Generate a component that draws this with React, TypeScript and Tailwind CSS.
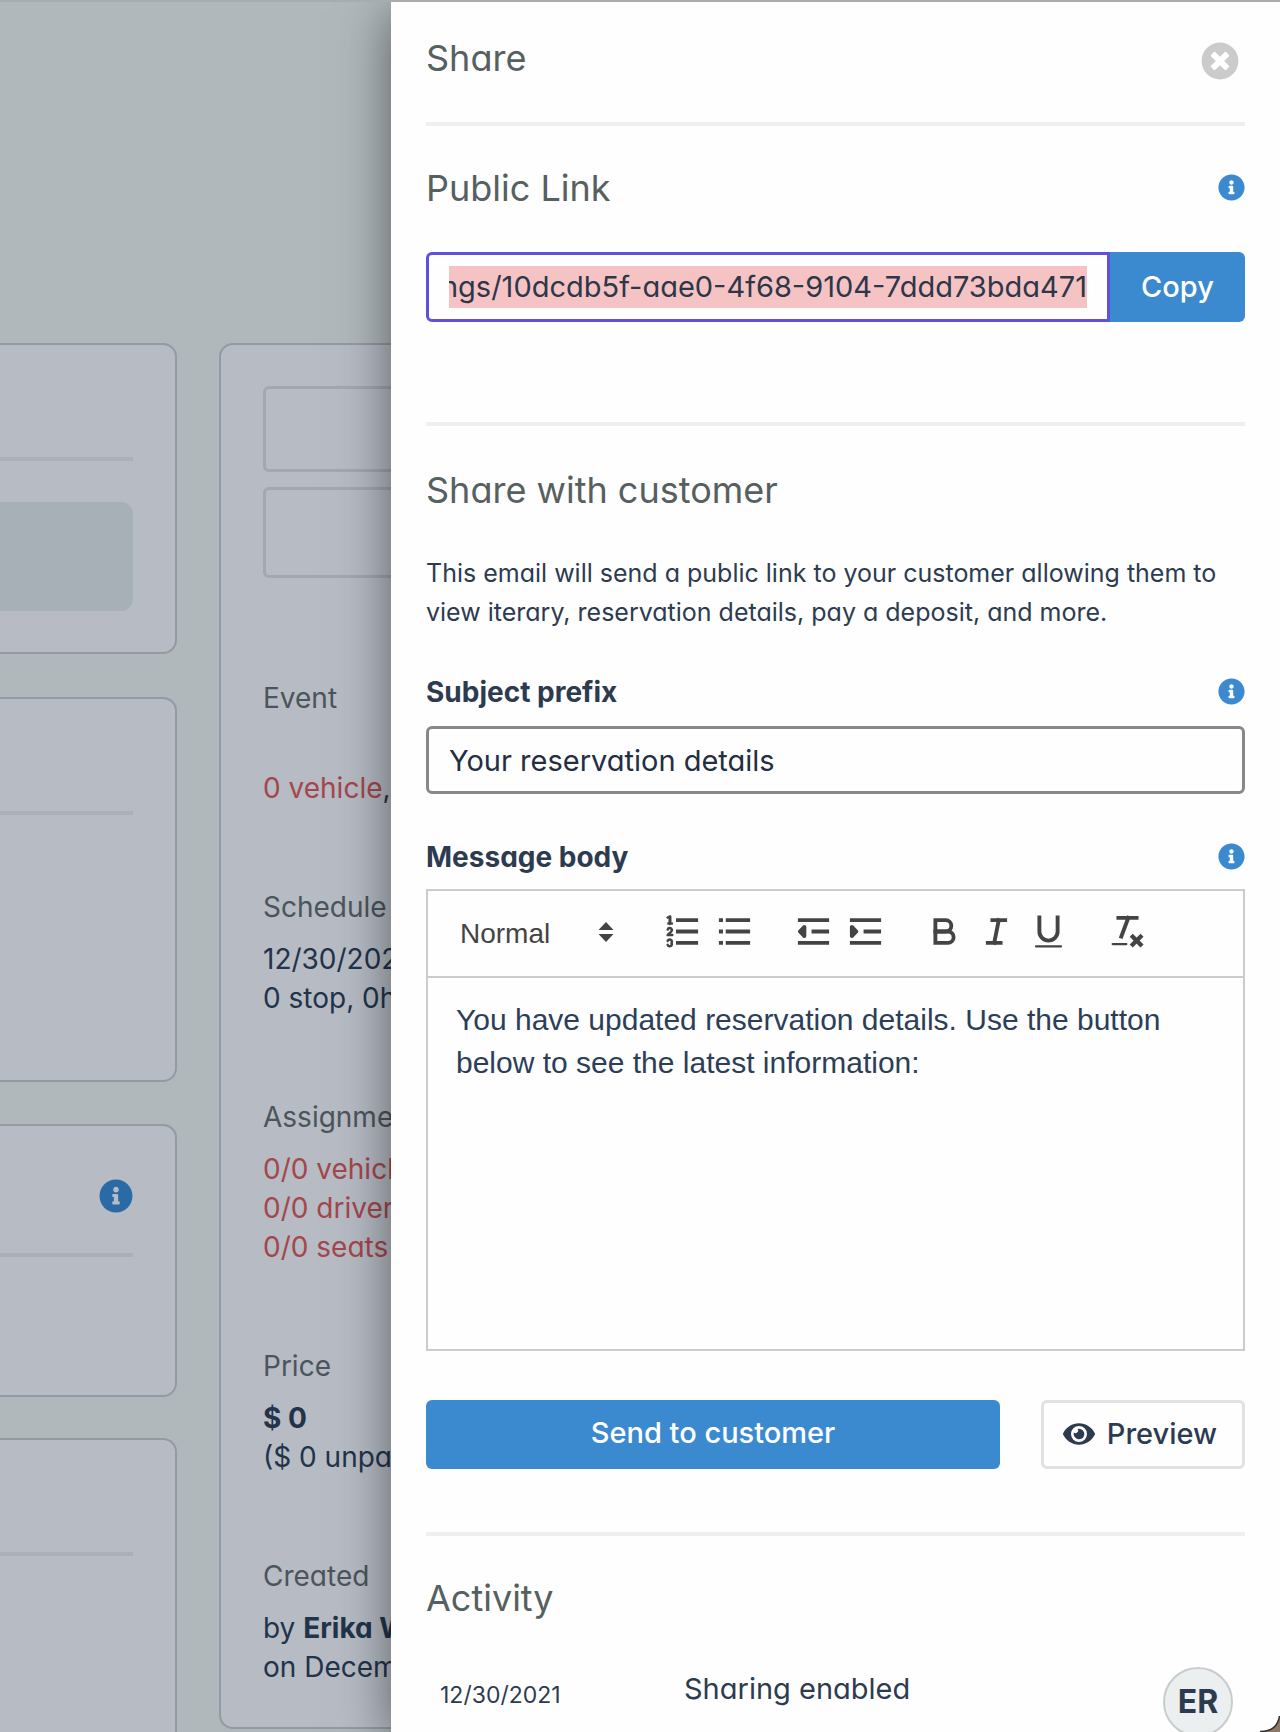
import { useEffect, useRef } from "react";
import type { ReactNode } from "react";
import { FaEye, FaInfoCircle, FaTimesCircle } from "react-icons/fa";

function Divider() {
  return <hr className="h-1 border-0 bg-[#eeefef]" />;
}

function InfoButton({ label }: { label: string }) {
  return (
    <button type="button" aria-label={label} className="shrink-0 pb-0.5 text-[#3b8ad0]">
      <FaInfoCircle className="size-[27px]" />
    </button>
  );
}

function Heading({ children }: { children: ReactNode }) {
  return <h2 className="text-[36px] leading-[48px] text-[#566060]">{children}</h2>;
}

function ToolButton({ label, children }: { label: string; children: ReactNode }) {
  return (
    <button type="button" aria-label={label} className="flex h-11 w-[52px] items-center justify-center">
      <svg
        viewBox="0 0 18 18"
        className="size-[41px] shrink-0 fill-none stroke-[#444] stroke-[1.7]"
        strokeLinecap="square"
      >
        {children}
      </svg>
    </button>
  );
}

function Toolbar() {
  return (
    <div className="flex h-[87px] items-center gap-[27px] border-b-2 border-[#ccc] pb-1 pl-8">
      <div className="relative">
        <select
          aria-label="Text style"
          defaultValue="Normal"
          className="w-[169px] appearance-none bg-transparent pt-1 font-['Liberation_Sans',sans-serif] text-[28px] leading-[40px] font-medium text-[#444]"
        >
          <option>Normal</option>
          <option>Heading</option>
        </select>
        <svg viewBox="0 0 16 20" className="pointer-events-none absolute top-3 left-[138px] h-5 w-4 fill-[#444]">
          <path d="M8 0 15.5 8H.5ZM8 20 .5 12h15Z" />
        </svg>
      </div>
      <div className="flex">
        <ToolButton label="Numbered list">
          <path d="M7 4h8M7 9h8M7 14h8" />
          <path className="stroke-1" d="M2.8 5.5h1.5" />
          <path
            className="fill-[#444] stroke-[0.3]"
            d="M3.5,6A0.5,0.5,0,0,1,3,5.5V3.085l-0.276.138A0.5,0.5,0,0,1,2.053,3c-0.124-.247-0.023-0.324.224-0.447l1-.5A0.5,0.5,0,0,1,4,2.5v3A0.5,0.5,0,0,1,3.5,6Z"
          />
          <g className="stroke-[1.1]" strokeLinecap="round">
            <path d="M4.5,10.5h-2c0-.234,1.85-1.076,1.85-2.234A0.959,0.959,0,0,0,2.5,8.156" />
            <path d="M2.5,14.846a0.959,0.959,0,0,0,1.85-.109A0.7,0.7,0,0,0,3.75,14a0.688,0.688,0,0,0,.6-0.736,0.959,0.959,0,0,0-1.85-.109" />
          </g>
        </ToolButton>
        <ToolButton label="Bulleted list">
          <path d="M6 4h9M6 9h9M6 14h9M3 4h.1M3 9h.1M3 14h.1" />
        </ToolButton>
      </div>
      <div className="flex">
        <ToolButton label="Decrease indent">
          <path d="M3 14h12M3 4h12M9 9h6" />
          <path className="fill-[#444]" strokeLinejoin="round" d="M5 7v4L3 9Z" />
        </ToolButton>
        <ToolButton label="Increase indent">
          <path d="M3 14h12M3 4h12M9 9h6" />
          <path className="fill-[#444]" strokeLinejoin="round" d="M3 7v4l2-2Z" />
        </ToolButton>
      </div>
      <div className="flex">
        <ToolButton label="Bold">
          <path d="M5 4h4.5a2.5 2.5 0 0 1 0 5H5Z" />
          <path d="M5 9h5.5a2.5 2.5 0 0 1 0 5H5Z" />
        </ToolButton>
        <ToolButton label="Italic">
          <path d="M7.2 4h5.6M5.2 14h5.6M8 14 10 4" />
        </ToolButton>
        <ToolButton label="Underline">
          <path d="M5 2.8V9a4 4 0 0 0 8 0V2.8" />
          <rect className="fill-[#444] stroke-none" x="3" y="15" width="12" height="1" rx=".5" />
        </ToolButton>
      </div>
      <ToolButton label="Clear formatting">
        <path d="M5 3h8M6.3 11.2 9.35 3" />
        <path className="stroke-[1.9]" d="M11.3 11.3l3.4 3.4M14.7 11.3l-3.4 3.4" />
        <rect className="fill-[#444] stroke-none" x="2" y="14" width="7" height="1" rx=".5" />
      </ToolButton>
    </div>
  );
}

function SideCard({ className, children }: { className: string; children?: ReactNode }) {
  return (
    <section
      className={`shrink-0 rounded-r-[14px] border-2 border-l-0 border-[#949aa1] bg-[#b6bbc4] pr-[42px] ${className}`}
    >
      {children}
    </section>
  );
}

function SideRule() {
  return <hr className="h-1 border-0 bg-[#a9b0b8]" />;
}

function Detail({ label, children }: { label: string; children: ReactNode }) {
  return (
    <div className="mb-20">
      <dt className="mb-[13px] text-[#4b555a]">{label}</dt>
      <dd>{children}</dd>
    </div>
  );
}

function Backdrop() {
  return (
    <div className="flex w-[391px] shrink-0 gap-[42px] overflow-hidden pt-[341px] text-[28px] leading-[39px] whitespace-nowrap text-[#22334a]">
      <div className="flex w-[177px] shrink-0 flex-col">
        <SideCard className="mb-[43px] h-[311px] pt-[112px]">
          <SideRule />
          <div className="mt-[41px] h-[109px] rounded-r-xl bg-[#a8b0b7]" />
        </SideCard>
        <SideCard className="mb-[42px] h-[385px] pt-[112px]">
          <SideRule />
        </SideCard>
        <SideCard className="mb-[41px] h-[273px] pt-[53px]">
          <button type="button" aria-label="About this section" className="ml-auto block text-[#2b6ba5]">
            <FaInfoCircle className="size-[34px]" />
          </button>
          <div className="mt-10">
            <SideRule />
          </div>
        </SideCard>
        <SideCard className="h-[320px] pt-[112px]">
          <SideRule />
        </SideCard>
      </div>
      <section className="w-[420px] shrink-0 self-start rounded-[14px] border-2 border-[#949aa1] bg-[#b6bbc4] px-[42px] pt-[41px]">
        <div className="h-[86px] rounded-md border-[3px] border-[#a2a8b0]" />
        <div className="mt-[15px] h-[91px] rounded-md border-[3px] border-[#a2a8b0]" />
        <dl className="mt-[101px] -mb-10">
          <div className="mb-20">
            <dt className="mb-[51px] text-[#4b555a]">Event</dt>
            <dd>
              <span className="text-[#a3474d]">0 vehicle</span>,
            </dd>
          </div>
          <Detail label="Schedule">
            12/30/2021
            <br />0 stop, 0h
          </Detail>
          <Detail label="Assignments">
            <span className="text-[#a3474d]">
              0/0 vehicle
              <br />
              0/0 driver
              <br />
              0/0 seats
            </span>
          </Detail>
          <Detail label="Price">
            <strong>$ 0</strong>
            <br />
            ($ 0 unpaid)
          </Detail>
          <Detail label="Created">
            by <strong>Erika W</strong>
            <br />
            on December
          </Detail>
        </dl>
      </section>
    </div>
  );
}

function PublicLink() {
  const link = useRef<HTMLInputElement>(null);

  useEffect(() => {
    const input = link.current;
    if (!input) return;
    input.focus();
    input.select();
    input.scrollLeft = input.scrollWidth;
  }, []);

  return (
    <section className="pt-[38px] pb-[100px]">
      <div className="mb-10 flex items-center justify-between">
        <Heading>Public Link</Heading>
        <InfoButton label="About the public link" />
      </div>
      <div className="flex h-[70px]">
        <input
          ref={link}
          readOnly
          aria-label="Public link"
          defaultValue="/bookings/10dcdb5f-aae0-4f68-9104-7ddd73bda471"
          className="min-w-0 flex-1 rounded-l-md border-[3px] border-[#6150dc] px-5 text-[29px] leading-[42px] text-[#2d3748] outline-none selection:bg-[#f6c3c5] selection:text-[#2d3748]"
        />
        <button type="button" className="w-[135px] rounded-r-md bg-[#3b8ad0] text-[29px] font-medium text-white">
          Copy
        </button>
      </div>
    </section>
  );
}

function ShareWithCustomer() {
  return (
    <section className="pt-10 pb-[63px]">
      <Heading>Share with customer</Heading>
      <p className="my-10 text-[25px] leading-[39px]">
        This email will send a public link to your customer allowing them to view iterary, reservation details, pay a
        deposit, and more.
      </p>
      <div className="mb-3.5 flex items-center justify-between">
        <label htmlFor="subject" className="text-[28px] leading-[40px] font-bold">
          Subject prefix
        </label>
        <InfoButton label="About the subject prefix" />
      </div>
      <input
        id="subject"
        defaultValue="Your reservation details"
        className="h-[68px] w-full rounded-md border-[3px] border-[#888] px-5 text-[29px] text-[#232e42]"
      />
      <div className="mt-[43px] mb-3 flex items-center justify-between">
        <label htmlFor="message" className="text-[28px] leading-[40px] font-bold">
          Message body
        </label>
        <InfoButton label="About the message body" />
      </div>
      <div className="border-2 border-[#ccc]">
        <Toolbar />
        <textarea
          id="message"
          defaultValue="You have updated reservation details. Use the button below to see the latest information:"
          className="block h-[371px] w-full resize-none px-7 py-5 font-['Liberation_Sans',sans-serif] text-[30px] leading-[43px] text-[#2c3e58] outline-none"
        />
      </div>
      <div className="mt-[49px] flex h-[69px] gap-[41px] text-[29px] font-medium">
        <button type="button" className="flex-1 rounded-md bg-[#3b8ad0] pb-1 text-white">
          Send to customer
        </button>
        <button
          type="button"
          className="flex w-[204px] items-center justify-center gap-3 rounded-md border-[3px] border-[#dfe1e2] pr-1.5 pb-0.5"
        >
          <FaEye className="size-8" />
          Preview
        </button>
      </div>
    </section>
  );
}

function Activity() {
  return (
    <section className="pt-[38px]">
      <Heading>Activity</Heading>
      <div className="mt-[45px] flex pr-3 pl-3.5">
        <time className="w-[244px] pt-2 text-[23px] leading-[40px]">12/30/2021</time>
        <p className="flex-1 pt-0.5 text-[29px] leading-[40px]">Sharing enabled</p>
        <div className="flex size-[70px] items-center justify-center rounded-full border-2 border-[#c9cccd] bg-[#eceff0] text-[32px] font-bold">
          ER
        </div>
      </div>
    </section>
  );
}

export default function App() {
  return (
    <div className="relative flex h-screen overflow-hidden border-t-2 border-[#a8acae] bg-[#b0b8bb] font-[Inter,sans-serif] text-[#2d3b50] [font-feature-settings:'cv11']">
      <Backdrop />
      <aside className="z-10 min-w-0 flex-1 overflow-y-auto bg-[#fefefe] px-[35px] shadow-[0_10px_48px_rgba(0,0,0,0.5)] [scrollbar-width:none]">
        <header className="flex items-end justify-between pt-8 pr-1.5 pb-10">
          <Heading>Share</Heading>
          <button type="button" aria-label="Close" className="pb-0.5 text-[#cbcbcb]">
            <FaTimesCircle className="size-[38px]" />
          </button>
        </header>
        <Divider />
        <PublicLink />
        <Divider />
        <ShareWithCustomer />
        <Divider />
        <Activity />
      </aside>
      <svg viewBox="0 0 20 16" className="absolute right-0 bottom-0 z-20 h-4 w-5">
        <path d="M20 0v16H0C11 16 18 10 20 0Z" fill="#8b7a6c" />
        <path d="M0 15.5C11 15.5 18 10 19.5 0" fill="none" stroke="#333" strokeWidth="1.5" />
      </svg>
    </div>
  );
}
